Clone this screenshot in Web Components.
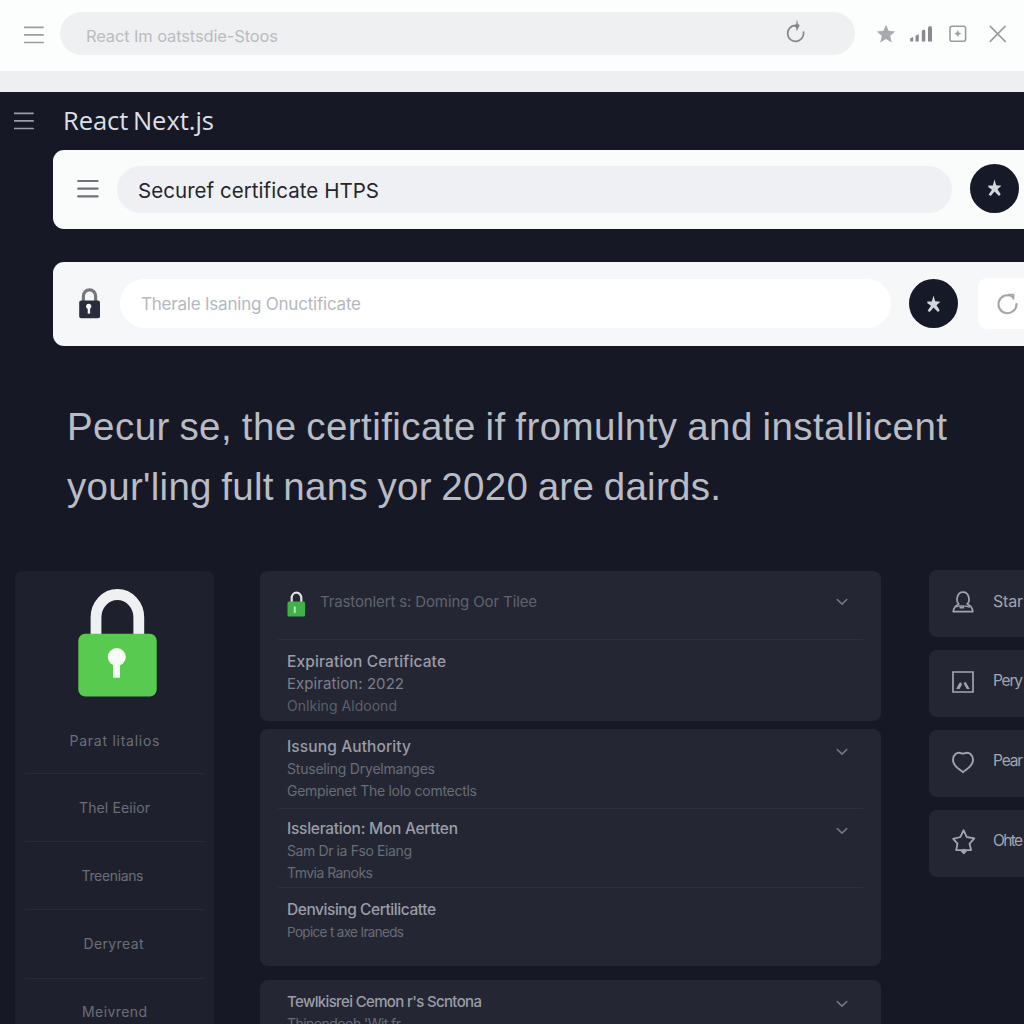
<!DOCTYPE html>
<html lang="en">
<head>
<meta charset="utf-8">
<title>React Next.js</title>
<style>
html,body{margin:0;height:1024px;overflow:hidden;background:#161925}
body{font-family:Inter,"Liberation Sans",sans-serif}
</style>
</head>
<body>
<cert-app></cert-app>
<script>
const ICONS = {
  menu: [20,20,'<path d="M.5 2.3h18.6M.5 9.9h18.6M.5 17.5h18.6" stroke="currentColor" stroke-width="1.7" stroke-linecap="round"/>'],
  menubold: [22,20,'<path d="M1.2 2h19.4M1.2 9.7h19.4M1.2 17.4h19.4" stroke="currentColor" stroke-width="2.2" stroke-linecap="round"/>'],
  reload: [20,26,'<path d="M9.2 6.4A8 8 0 1 0 17.5 13" fill="none" stroke="currentColor" stroke-width="1.7" stroke-linecap="round"/><path d="M10.8.5 11.8 4.4 13.8 6.8 12.6 8.4 10.7 12.2 10 8.5 8.1 7.2 10.2 5z" fill="currentColor"/>'],
  star: [20,20,'<path d="m10 .7 2.6 6.1 6.6.6-5 4.4 1.5 6.7L10 15l-5.7 3.5 1.5-6.7-5-4.4 6.6-.6z" fill="currentColor"/>'],
  signal: [24,18,'<path d="M1.2 13.3 4.2 12v4.5H1.2zM6.5 10.8l3.3-1.6v7.3H6.5zM12.8 6.5q0-1.5 1.8-2 1.7 0 1.7 1.5v10.5h-3.5zM19 3.2q0-2 2-2.2 2 0 2 2v13.5h-4z" fill="currentColor"/>'],
  plusbox: [18,18,'<rect x="1" y="1.2" width="15.6" height="15" rx="2" fill="none" stroke="currentColor" stroke-width="1.6"/><path d="m8.8 5.6.9 2.1 2.1.9-2.1.9-.9 2.1-.9-2.1-2.1-.9 2.1-.9z" fill="currentColor" stroke="currentColor" stroke-width=".6"/>'],
  close: [18,18,'<path d="m1.3 1.4 14.8 15M16.1 1.4l-14.8 15" stroke="currentColor" stroke-width="1.7" stroke-linecap="round"/>'],
  spark: [16,18,'<path d="M7.5.6 9.2 6.2l5.2.5-3.9 3.5 3.2 5-1.7 1.7L7.5 12.6l-3.8 4.5-2.1-1.4 3.4-5L1.2 8l.2-1.6 4.4.1z" fill="currentColor"/>'],
  refresh: [22,22,'<path d="M15.6 3.8A9 9 0 1 0 19.5 11" fill="none" stroke="currentColor" stroke-width="2.1" stroke-linecap="round"/><path d="M11 1.7h5.6l-.2 4.9" fill="none" stroke="currentColor" stroke-width="1.8" stroke-linejoin="round"/>'],
  lockdark: [22,31,'<path d="M4.4 14V8.2a6.1 6.4 0 0 1 12.2 0V14" fill="none" stroke="#77777d" stroke-width="3.2"/><rect x=".2" y="12.4" width="20.8" height="17.8" rx="2" fill="#292c3b"/><circle cx="9.7" cy="18.3" r="2.6" fill="#f4f5f6"/><path d="M8.7 18h2.4v7.6H8.7z" fill="#f4f5f6"/>'],
  lockbig: [80,108,'<path d="M18 47V28.5a21.4 23 0 0 1 42.8 0V47" fill="none" stroke="#eef0f1" stroke-width="10.8"/><rect x=".3" y="44.7" width="78.4" height="62.8" rx="7" fill="#57ca4f"/><circle cx="38.8" cy="68" r="9" fill="#f7fbf6"/><path d="M35 70h7v18.7h-7z" fill="#f7fbf6"/>'],
  lockmini: [19,27,'<path d="M4.7 12V7a4.8 5.4 0 0 1 9.6 0v5" fill="none" stroke="#dfe3e2" stroke-width="2.2"/><rect x=".5" y="10.5" width="17.6" height="15" rx="1.6" fill="#3fb34a"/><path d="M6.8 15.4h2v6.3l-2 .5z" fill="#b3e5ae"/>'],
  chevron: [12,8,'<path d="m1.2 1.5 4.8 4.6 4.8-4.6" fill="none" stroke="currentColor" stroke-width="1.5" stroke-linecap="round"/>'],
  user: [22,22,'<path d="M7.2 13.2C3.5 10.7 4.6 1.2 11 1.2s7.6 9.5 3.8 12M7.2 13.2C3.4 14.2 1.8 16.4 1.2 20.6h19.6c-.4-4.2-2.1-6.4-6-7.4" fill="none" stroke="currentColor" stroke-width="1.7" stroke-linejoin="round"/><path d="M3.6 15.9q5.4-2.2 14.4.2" fill="none" stroke="currentColor" stroke-width="1.4"/><path d="M7.5 15.5h4.6v2H7.5z" fill="currentColor"/>'],
  image: [22,22,'<path d="M1 1h20v20H1z" fill="none" stroke="currentColor" stroke-width="1.7"/><path d="m4.2 18 3-5.8 2-1 .7 2.6-2.4 4.2zM11.6 11.9l2.1-.8 4 6.9h-2.9L12.5 14z" fill="currentColor"/>'],
  heart: [22,23,'<path d="M11 21.2C8 18.1 1 16 1 8.8 1 4 5 .6 9 2.2l2 .3 2-.3c4-1.6 8 1.8 8 6.6 0 7.2-7 9.3-10 12.4z" fill="none" stroke="currentColor" stroke-width="1.9" stroke-linejoin="round"/>'],
  badge: [24,26,'<path d="M11.6 1.2 14.7 8l7.6 1.4-4.8 5.4 1.6 6.2-4.4.1-2.9 3-3-3-4.6-.1 1.3-6.3L1.2 9.9 8.4 8z" fill="none" stroke="currentColor" stroke-width="1.8" stroke-linejoin="round"/><path d="m8.6 20.7 3.2-.9 3.3.9-3.3 4.8z" fill="currentColor"/>']
};

class UiIcon extends HTMLElement {
  connectedCallback() {
    const [w,h,body] = ICONS[this.getAttribute('name')];
    const root = this.attachShadow({mode:'open'});
    root.innerHTML = `<style>:host{display:block;flex:none;width:${w}px;height:${h}px}svg{display:block}</style><svg width="${w}" height="${h}" viewBox="0 0 ${w} ${h}" aria-hidden="true">${body}</svg>`;
  }
}

/* One line of text, tracked so that it fills the width given in "w". */
class UiText extends HTMLElement {
  connectedCallback() {
    const root = this.attachShadow({mode:'open'});
    root.innerHTML = `<style>:host{display:block;flex:none;white-space:pre}span{display:inline-block}</style><span></span>`;
    const span = root.querySelector('span');
    span.textContent = this.textContent;
    const w = parseFloat(this.getAttribute('w'));
    if (w) {
      const gap = (w - span.getBoundingClientRect().width) / (span.textContent.length - 1);
      span.style.letterSpacing = gap.toFixed(3) + 'px';
      span.style.marginRight = (-gap).toFixed(3) + 'px';
    }
  }
}

class BrowserBar extends HTMLElement {
  connectedCallback() {
    this.attachShadow({mode:'open'}).innerHTML = `<style>
:host{display:flex;flex:none;box-sizing:border-box;height:92px;padding:12px 0 0 24px;background:#fcfdfd;border-bottom:21px solid #edeff1;color:#9c9da1}
.menu{margin:13px 16px 0 0}
.pill{display:flex;box-sizing:border-box;width:795px;height:43px;padding:0 49px 0 26px;align-items:center;justify-content:space-between;border-radius:22px;background:#eff0f2;color:#babcc0;font:16.5px/24px Inter,sans-serif}
.pill ui-icon{color:#85868a;margin-top:-3px}
.pill ui-text{margin-top:5px}
.tools{display:flex;align-items:center;height:43px;margin-left:21px}
</style><ui-icon class="menu" name="menu"></ui-icon>
<div class="pill"><ui-text w="192">React Im oatstsdie-Stoos</ui-text><ui-icon name="reload"></ui-icon></div>
<div class="tools"><ui-icon name="star" style="color:#a9aaae"></ui-icon><ui-icon name="signal" style="margin-left:13px;color:#8a8b90"></ui-icon><ui-icon name="plusbox" style="margin-left:16px"></ui-icon><ui-icon name="close" style="margin-left:22px"></ui-icon></div>`;
  }
}

class RoundAction extends HTMLElement {
  connectedCallback() {
    this.attachShadow({mode:'open'}).innerHTML = `<style>:host{display:flex;flex:none;width:49px;height:49px;border-radius:50%;align-items:center;justify-content:center;background:#161928;color:#d4d6dc}</style><ui-icon name="spark"></ui-icon>`;
  }
}

class AddressCard extends HTMLElement {
  connectedCallback() {
    this.attachShadow({mode:'open'}).innerHTML = `<style>
:host{display:flex;box-sizing:border-box;align-items:center;margin-left:53px;width:1000px;border-radius:11px 0 0 11px;background:var(--card)}
.lead{display:flex;width:var(--lead);flex:none}
.pill{display:flex;flex:none;align-items:center;box-sizing:border-box;width:var(--pill-w);height:var(--pill-h);padding-left:21px;border-radius:25px;background:var(--pill)}
</style><div class="lead"><slot name="lead"></slot></div><div class="pill"><slot></slot></div><slot name="end"></slot>`;
  }
}

class SideMenu extends HTMLElement {
  connectedCallback() {
    this.attachShadow({mode:'open'}).innerHTML = `<style>
:host{display:flex;flex-direction:column;align-items:center;flex:none;box-sizing:border-box;width:199px;height:480px;margin-top:.5px;padding-top:18px;border-radius:8px;background:#1e212d;color:#6b6e78;font:14px/20px Inter,sans-serif}
ui-icon{margin:0 0 34px 6px}
div{display:flex;flex:none;justify-content:center;box-sizing:border-box;width:180px;height:68.4px;padding-top:24.5px;border-top:1px solid #282b36}
div.first{height:42px;padding-top:0;border:0}
</style><ui-icon name="lockbig"></ui-icon>
<div class="first"><ui-text w="90">Parat litalios</ui-text></div>
<div><ui-text w="71">Thel Eeiior</ui-text></div>
<div><ui-text w="62" style="margin-left:-4px">Treenians</ui-text></div>
<div style="padding-top:24px"><ui-text w="60" style="margin-left:-2px">Deryreat</ui-text></div>
<div style="padding-top:23px"><ui-text w="65">Meivrend</ui-text></div>`;
  }
}

class InfoPanel extends HTMLElement {
  connectedCallback() {
    this.attachShadow({mode:'open'}).innerHTML = `<style>:host{display:block;box-sizing:border-box;width:621px;border-radius:8px;background:#242733;overflow:hidden}</style><slot></slot>`;
  }
}

class InfoRow extends HTMLElement {
  connectedCallback() {
    const chevron = this.hasAttribute('open') ? '<ui-icon name="chevron"></ui-icon>' : '';
    this.attachShadow({mode:'open'}).innerHTML = `<style>
:host{display:flex;box-sizing:border-box;justify-content:space-between;margin:0 18px;padding:7px 15px 0 9px;color:#686c77;font:14px/22.4px Inter,sans-serif}
:host([line]){border-top:1px solid #2e313c}
::slotted(.title){font-size:15.5px;font-weight:500;color:#9a9da7}
ui-icon{margin-top:var(--chev,12px);color:#777b87}
</style><div><slot></slot></div>${chevron}`;
  }
}

class QuickLink extends HTMLElement {
  connectedCallback() {
    this.attachShadow({mode:'open'}).innerHTML = `<style>
:host{display:flex;box-sizing:border-box;width:140px;height:67.5px;padding:0 0 2px 23px;align-items:center;border-radius:8px;background:#242733;color:#a2a5af;font:16px/22px Inter,sans-serif}
.ic{display:flex;width:41px;flex:none;height:26px;align-items:center}
.tx{margin-top:-3px}
</style><div class="ic"><ui-icon name="${this.getAttribute('icon')}"></ui-icon></div><div class="tx"><slot></slot></div>`;
  }
}

class CertApp extends HTMLElement {
  connectedCallback() {
    this.attachShadow({mode:'open'}).innerHTML = `<style>
:host{display:flex;flex-direction:column;width:1024px;height:1024px;overflow:hidden;background:#161925}
header{display:flex;align-items:center;height:57.5px;flex:none;box-sizing:border-box;padding:0 0 0 14px;color:#dddfe4;font:25.5px/34px "Open Sans",sans-serif;word-spacing:-2px}
header ui-icon{margin-right:29px;color:#9c9fa9}
header ui-text{margin-top:-2px}
.one{--card:#fafbfb;--pill:#eff0f3;--pill-w:835px;--pill-h:47px;--lead:41px;height:79.5px;flex:none;padding-left:23px;color:#25272c;font:20.5px/28px Inter,sans-serif}
.one ui-text{margin-top:3px}
.two{--card:#f6f7f8;--pill:#fff;--pill-w:771px;--pill-h:49px;--lead:41px;height:83.5px;flex:none;margin-top:33px;padding-left:26px;color:#b5b8bf;font:17px/24px Inter,sans-serif}
.square{display:flex;flex:none;box-sizing:border-box;align-items:center;width:90px;height:51px;margin-left:20px;padding-left:19px;border-radius:9px;background:#fff;color:#a4a5a8}
h1{margin:51px 0 0 67px;height:120px;flex:none;color:#b9bcc4;font:400 38.5px/60px "Liberation Sans",sans-serif;word-spacing:-1.5px}
.cols{display:flex;align-items:flex-start;margin:53.5px 0 0 15px;flex:none}
main{display:flex;flex:none;flex-direction:column;margin:0 48px 0 46px;padding-top:.5px}
.top{display:flex;align-items:center;height:68px;padding:0 33px 0 27px;font:15px/22px Inter,sans-serif;color:#5f636e}
.top ui-text{margin-left:14px;margin-right:auto;margin-top:-5px}
.top .ch{color:#777b87;margin-top:-5px}
nav{display:flex;flex:none;flex-direction:column;gap:12.5px;margin-top:-.5px}
</style>
<browser-bar></browser-bar>
<header><ui-icon name="menu"></ui-icon><ui-text w="151">React Next.js</ui-text></header>
<address-card class="one"><ui-icon slot="lead" name="menubold" style="color:#707279;margin-left:1px"></ui-icon><ui-text w="241">Securef certificate HTPS</ui-text><round-action slot="end" style="margin:-2px 0 0 18px"></round-action></address-card>
<address-card class="two"><ui-icon slot="lead" name="lockdark"></ui-icon><ui-text w="220">Therale Isaning Onuctificate</ui-text><round-action slot="end" style="margin-left:18px"></round-action><div class="square" slot="end"><ui-icon name="refresh"></ui-icon></div></address-card>
<h1><ui-text w="880">Pecur se, the certificate if fromulnty and installicent</ui-text><ui-text w="654">your'ling fult nans yor 2020 are dairds.</ui-text></h1>
<div class="cols">
<side-menu></side-menu>
<main>
<info-panel style="height:150px">
<div class="top"><ui-icon name="lockmini"></ui-icon><ui-text w="217">Trastonlert s: Doming Oor Tilee</ui-text><ui-icon class="ch" name="chevron"></ui-icon></div>
<info-row line style="padding-top:11px"><ui-text class="title" w="159">Expiration Certificate</ui-text><ui-text w="117" style="font-size:15px;color:#7b7f8a">Expiration: 2022</ui-text><ui-text w="110" style="color:#5b5f6a">Onlking Aldoond</ui-text></info-row>
</info-panel>
<info-panel style="height:237px;margin-top:8px">
<info-row open style="height:79px"><ui-text class="title" w="124">Issung Authority</ui-text><ui-text w="148">Stuseling Dryelmanges</ui-text><ui-text w="190">Gempienet The lolo comtectls</ui-text></info-row>
<info-row line open style="height:79px;padding-top:9px;--chev:9px"><ui-text class="title" w="171">Issleration: Mon Aertten</ui-text><ui-text w="125">Sam Dr ia Fso Eiang</ui-text><ui-text w="86">Tmvia Ranoks</ui-text></info-row>
<info-row line style="padding-top:11px"><ui-text class="title" w="149">Denvising Certilicatte</ui-text><ui-text w="117" style="font-size:13.5px">Popice t axe Iraneds</ui-text></info-row>
</info-panel>
<info-panel style="height:80px;margin-top:14px">
<info-row open style="padding-top:11px;--chev:9px"><ui-text class="title" w="195" style="font-size:15px">Tewlkisrei Cemon r's Scntona</ui-text><ui-text w="114">Thinondooh 'Wit fr</ui-text></info-row>
</info-panel>
</main>
<nav>
<quick-link icon="user"><ui-text w="30">Star</ui-text></quick-link>
<quick-link icon="image"><ui-text w="30" style="font-size:15.5px">Pery</ui-text></quick-link>
<quick-link icon="heart"><ui-text w="30" style="font-size:15.5px">Pear</ui-text></quick-link>
<quick-link icon="badge"><ui-text w="30" style="font-size:15.5px">Ohte</ui-text></quick-link>
</nav>
</div>`;
  }
}

customElements.define('ui-icon', UiIcon);
customElements.define('round-action', RoundAction);
customElements.define('address-card', AddressCard);
customElements.define('info-panel', InfoPanel);
customElements.define('info-row', InfoRow);
customElements.define('quick-link', QuickLink);
customElements.define('browser-bar', BrowserBar);
customElements.define('side-menu', SideMenu);
customElements.define('cert-app', CertApp);
/* Defined last, so each line is measured once all the surrounding styles apply. */
customElements.define('ui-text', UiText);
</script>
</body>
</html>
